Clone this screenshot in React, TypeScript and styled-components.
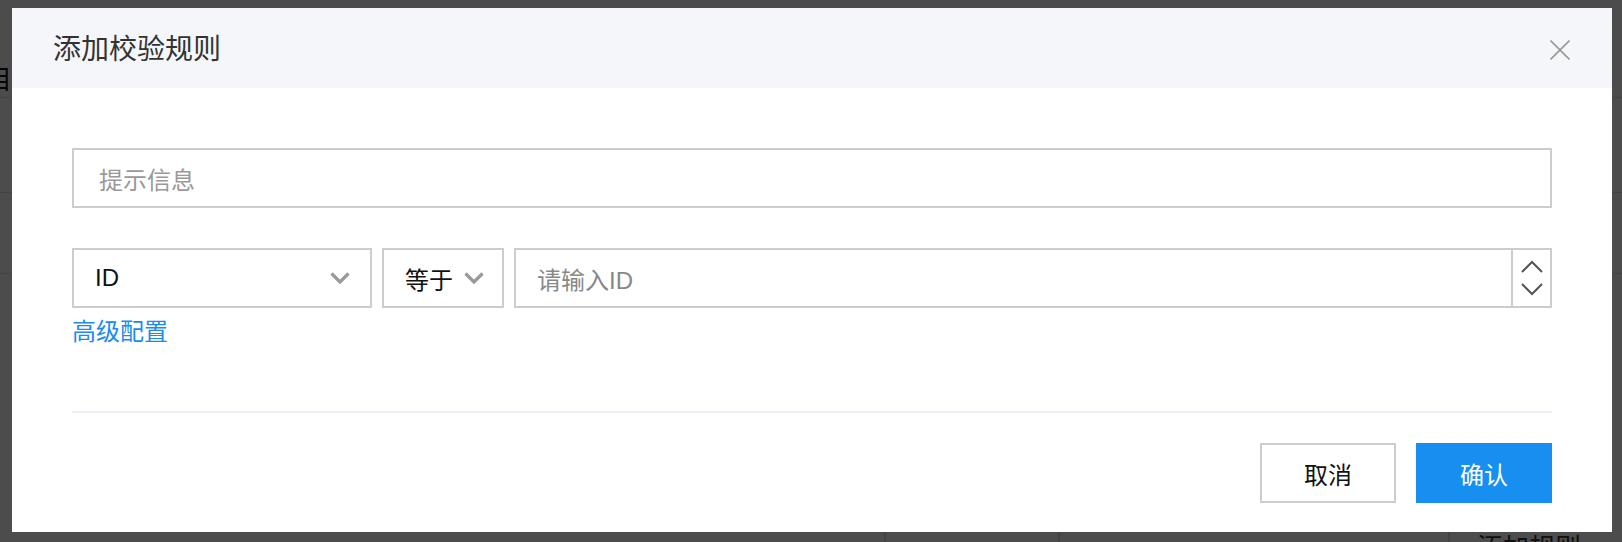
import React from "react";
import styled, { createGlobalStyle } from "styled-components";

const GlobalStyle = createGlobalStyle`
  html, body { margin: 0; padding: 0; background: #fff; }
  body { font-family: "Liberation Sans", "Noto Sans CJK SC", sans-serif; }
  * { box-sizing: border-box; }
`;

const Page = styled.div`
  position: relative;
  width: 1622px;
  height: 542px;
  overflow: hidden;
  background: #fff;
`;

/* ---------- underlying page (dimmed) ---------- */
const BackPage = styled.div`
  display: flex;
  flex-direction: column;
  width: 100%;
  height: 100%;
`;

const BackTitle = styled.div`
  margin: 63px 0 0 -92px;
  font-size: 26px;
  line-height: 30px;
  color: #111;
  font-family: "Noto Sans CJK SC", sans-serif;
  height: 35px;
  border-bottom: 1px solid #e4e4e4;
`;

const BackRow = styled.div<{ $h: number }>`
  height: ${(p) => p.$h}px;
  border-bottom: 1px solid #e4e4e4;
`;

const BackTable = styled.div`
  flex: 1;
  display: grid;
  grid-template-columns: 886px 174px 390px 1fr;
`;

const BackCell = styled.div`
  border-right: 2px solid #e0e0e0;
  display: flex;
  align-items: flex-end;
  justify-content: center;
  &:last-child { border-right: none; }
`;

const BackLink = styled.span`
  font-family: "Noto Sans CJK SC", sans-serif;
  font-size: 26px;
  color: #333;
  margin-bottom: -22px;
  margin-left: -14px;
`;

const Overlay = styled.div`
  position: absolute;
  inset: 0;
  background: rgba(0, 0, 0, 0.7);
`;

/* ---------- modal ---------- */
const Modal = styled.div`
  position: absolute;
  left: 12px;
  top: 8px;
  width: 1600px;
  height: 524px;
  background: #fff;
  display: flex;
  flex-direction: column;
`;

const Header = styled.div`
  height: 80px;
  flex: none;
  background: #f5f6fa;
  display: flex;
  align-items: center;
  justify-content: space-between;
  padding: 0 42px 0 41px;
`;

const Title = styled.h2`
  margin: 0;
  font-weight: 400;
  font-size: 28px;
  line-height: 36px;
  color: #333;
  font-family: "Noto Sans CJK SC", sans-serif;
  margin-top: -2px;
`;

const CloseButton = styled.button`
  border: none;
  background: transparent;
  padding: 0;
  width: 20px;
  height: 20px;
  display: flex;
  cursor: pointer;
  margin-top: 3px;
`;

const Body = styled.div`
  flex: 1;
  display: flex;
  flex-direction: column;
  padding: 60px 60px 30px;
`;

const TextInput = styled.div`
  height: 60px;
  border: 2px solid #cdcdcd;
  display: flex;
  align-items: center;
  padding-left: 25px;
  font-size: 24px;
  color: #999;
  font-family: "Liberation Sans", "Noto Sans CJK SC", sans-serif;
`;

const RuleRow = styled.div`
  margin-top: 40px;
  height: 60px;
  display: flex;
  gap: 10px;
`;

const Select = styled.div<{ $w: number; $pr: number }>`
  width: ${(p) => p.$w}px;
  flex: none;
  border: 2px solid #cdcdcd;
  display: flex;
  align-items: center;
  justify-content: space-between;
  padding: 0 ${(p) => p.$pr}px 0 21px;
  font-size: 24px;
  color: #111;
`;

const NumberInput = styled.div`
  flex: 1;
  border: 2px solid #cdcdcd;
  display: flex;
  align-items: stretch;
`;

const NumberText = styled.div`
  flex: 1;
  display: flex;
  align-items: center;
  padding-left: 21px;
  font-size: 24px;
  color: #888;
`;

const Spinner = styled.div`
  width: 39px;
  flex: none;
  border-left: 2px solid #cdcdcd;
  display: flex;
  flex-direction: column;
  align-items: center;
  justify-content: center;
  gap: 10px;
  padding-left: 1px;
`;

const Link = styled.a`
  margin-top: 5px;
  align-self: flex-start;
  font-size: 24px;
  line-height: 34px;
  color: #1a8cf0;
  text-decoration: none;
  font-family: "Noto Sans CJK SC", sans-serif;
`;

const Divider = styled.div`
  margin-top: 64px;
  height: 2px;
  background: #eeeff7;
`;

const Footer = styled.div`
  margin-top: 30px;
  display: flex;
  justify-content: flex-end;
  gap: 20px;
`;

const Button = styled.button<{ $primary?: boolean }>`
  width: 136px;
  height: 60px;
  font-size: 24px;
  font-family: "Noto Sans CJK SC", sans-serif;
  border: ${(p) => (p.$primary ? "none" : "2px solid #cdcdcd")};
  background: ${(p) => (p.$primary ? "#168ff0" : "#fff")};
  color: ${(p) => (p.$primary ? "#fff" : "#111")};
  padding: 0;
  cursor: pointer;
`;

const Chevron = ({ color = "#999" }: { color?: string }) => (
  <svg width="20" height="12" viewBox="0 0 20 12">
    <path d="M1.5 1.5 L10 10 L18.5 1.5" fill="none" stroke={color} strokeWidth="3.2" />
  </svg>
);

const Arrow = ({ up }: { up?: boolean }) => (
  <svg width="22" height="13" viewBox="0 0 22 13">
    <path
      d={up ? "M1 12 L11 2 L21 12" : "M1 1 L11 11 L21 1"}
      fill="none"
      stroke="#555"
      strokeWidth="2"
    />
  </svg>
);

export default function App() {
  return (
    <Page>
      <GlobalStyle />
      <BackPage>
        <BackTitle>校验项目</BackTitle>
        <BackRow $h={95} />
        <BackRow $h={81} />
        <BackTable>
          <BackCell />
          <BackCell />
          <BackCell />
          <BackCell>
            <BackLink>添加规则</BackLink>
          </BackCell>
        </BackTable>
      </BackPage>
      <Overlay />
      <Modal>
        <Header>
          <Title>添加校验规则</Title>
          <CloseButton aria-label="关闭">
            <svg width="20" height="20" viewBox="0 0 20 20">
              <path d="M0.5 0.5 L19.5 19.5 M19.5 0.5 L0.5 19.5" stroke="#999" strokeWidth="1.6" />
            </svg>
          </CloseButton>
        </Header>
        <Body>
          <TextInput>提示信息</TextInput>
          <RuleRow>
            <Select $w={300} $pr={20}>
              <span>ID</span>
              <Chevron />
            </Select>
            <Select $w={122} $pr={18}>
              <span>等于</span>
              <Chevron />
            </Select>
            <NumberInput>
              <NumberText>请输入ID</NumberText>
              <Spinner>
                <Arrow up />
                <Arrow />
              </Spinner>
            </NumberInput>
          </RuleRow>
          <Link href="#">高级配置</Link>
          <Divider />
          <Footer>
            <Button>取消</Button>
            <Button $primary>确认</Button>
          </Footer>
        </Body>
      </Modal>
    </Page>
  );
}
